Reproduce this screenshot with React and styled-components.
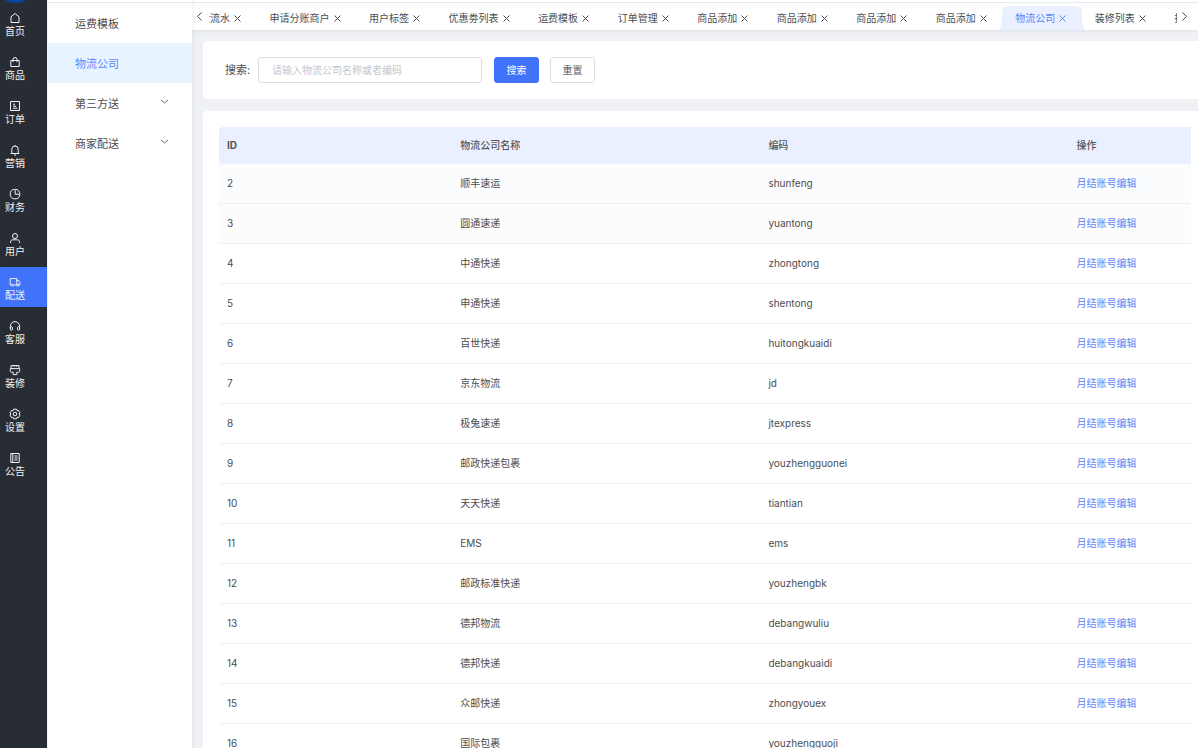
import React from 'react';
import styled, { createGlobalStyle } from 'styled-components';

const GlobalStyle = createGlobalStyle`
  * { box-sizing: border-box; }
  body {
    margin: 0;
    font-family: Inter, "Noto Sans CJK SC", sans-serif;
    font-size: 10px;
    line-height: 16px;
    color: #4c4d51;
    background: #eff1f5;
  }
  button, input { font: inherit; }
  ul { list-style: none; margin: 0; padding: 0; }
  a { color: inherit; text-decoration: none; }
`;

const Shell = styled.div`
  display: flex;
  height: 100vh;
  overflow: hidden;
`;

const Rail = styled.nav`
  flex: none;
  width: 47px;
  background: #282c34;
`;

const Logo = styled.svg`
  display: block;
  width: 31px;
  height: 3px;
`;

const RailList = styled.ul`
  display: flex;
  flex-direction: column;
  gap: 4px;
`;

const RailLink = styled.a`
  display: flex;
  flex-direction: column;
  align-items: center;
  height: 40px;
  padding: 9px 17px 0 0;
  color: #f1f2f3;
  background: ${(p) => (p.$active ? '#4073fa' : 'transparent')};

  svg { display: block; width: 12px; height: 12px; }
  span { line-height: 14px; }
`;

const SideMenu = styled.nav`
  position: relative;
  z-index: 1;
  flex: none;
  width: 145px;
  padding-top: 2px;
  background: #fff;
  border-left: 1px solid #eef0f4;
  box-shadow: 1px 0 4px rgba(0, 21, 41, 0.08);

  ul { border-top: 1px solid #e6e8f2; }
`;

const SideLink = styled.a`
  display: flex;
  align-items: center;
  justify-content: space-between;
  height: 40px;
  padding: 2px 23px 0 27px;
  font-size: 11px;
  color: ${(p) => (p.$active ? '#5b85fa' : '#4c4d51')};
  background: ${(p) => (p.$active ? '#e7f4ff' : 'transparent')};

  svg { width: 9px; height: 9px; margin-bottom: 6px; }
`;

const Main = styled.main`
  flex: 1;
  min-width: 0;
  display: flex;
  flex-direction: column;
`;

const TabBar = styled.div`
  flex: none;
  display: flex;
  height: 30px;
  padding-top: 2px;
  background: #fff;
  box-shadow: 0 1px 4px rgba(0, 21, 41, 0.08);
`;

const ScrollButton = styled.button`
  flex: none;
  display: flex;
  align-items: center;
  width: ${(p) => p.$width};
  padding: 0 0 0 4px;
  border: 0;
  border-top: 1px solid #e6e8f2;
  background: none;
  color: #444548;

  svg { width: 7px; height: 11px; }
`;

const TabViewport = styled.div`
  flex: 1;
  min-width: 0;
  display: flex;
  overflow: hidden;
  border-top: 1px solid #e6e8f2;
`;

const TabList = styled.ul`
  flex: 1 0 auto;
  display: flex;
  margin: 3px -64px 0 -32px;
`;

const Tab = styled.li`
  position: relative;
  flex: 1 0 auto;
  display: flex;
  align-items: center;
  gap: 4px;
  padding: 0 15px 0 13px;
  white-space: nowrap;
  border-radius: 6px 6px 0 0;
  color: ${(p) => (p.$active ? '#5b85fa' : '#4c4d51')};
  background: ${(p) => (p.$active ? '#eaf0ff' : 'transparent')};

  &::before, &::after {
    content: '';
    display: ${(p) => (p.$active ? 'block' : 'none')};
    position: absolute;
    bottom: 0;
    width: 3px;
    height: 8px;
    background: #eaf0ff;
  }
  &::before { right: 100%; clip-path: polygon(100% 0, 100% 100%, 0 100%); }
  &::after { left: 100%; clip-path: polygon(0 0, 100% 100%, 0 100%); }
`;

const CloseButton = styled.button`
  display: flex;
  padding: 0;
  border: 0;
  background: none;
  color: inherit;

  svg { width: 7px; height: 7px; }
`;

const Content = styled.div`
  flex: 1;
  min-height: 0;
  overflow: hidden auto;
  scrollbar-width: none;
  display: flex;
  flex-direction: column;
  gap: 12px;
  padding: 11px 0 0 11px;
`;

const SearchCard = styled.form`
  flex: none;
  display: flex;
  align-items: center;
  padding: 16px 22px;
  background: #fff;
  border-radius: 4px 0 0 4px;
`;

const SearchLabel = styled.label`
  width: 33px;
  font-size: 11px;
`;

const SearchInput = styled.input`
  width: 224px;
  height: 26px;
  margin-right: 12px;
  padding: 0 13px;
  border: 1px solid #dcdee6;
  border-radius: 3px;
  color: #4c4d51;
  outline: none;

  &::placeholder { color: #c3c7cf; opacity: 1; }
`;

const Button = styled.button`
  width: 45px;
  height: 26px;
  margin-right: 11px;
  padding: 0;
  border: 1px solid ${(p) => (p.$primary ? '#4073fa' : '#dcdee6')};
  border-radius: 3px;
  color: ${(p) => (p.$primary ? '#fff' : '#606266')};
  background: ${(p) => (p.$primary ? '#4073fa' : '#fff')};
`;

const TableCard = styled.section`
  flex: none;
  padding: 16px 7px 16px 16px;
  background: #fff;
  border-radius: 4px 0 0 0;
`;

const Table = styled.table`
  width: 100%;
  table-layout: fixed;
  border-collapse: separate;
  border-spacing: 0;
  text-align: left;
`;

const HeadCell = styled.th`
  width: ${(p) => p.$width};
  height: 37px;
  padding: 0 8px 2px;
  font-weight: ${(p) => (p.$strong ? 700 : 500)};
  color: #55575d;
  background: #eaf0ff;

  &:first-child { border-radius: 4px 0 0 4px; }
`;

const Row = styled.tr`
  background: ${(p) => p.$tint || '#fff'};
`;

const Cell = styled.td`
  height: 40px;
  padding: 0 8px 2px;
  border-bottom: 1px solid #eff0f3;
`;

const EditLink = styled.a`
  color: #5b85fa;
`;

const Icon = ({ children }) => (
  <svg viewBox="0 0 12 12" fill="none" stroke="currentColor" strokeWidth="1" strokeLinejoin="round" aria-hidden="true">
    {children}
  </svg>
);

const railItems = [
  ['首页', <Icon><path d="M2 10.5V4.8L6 1.4l4 3.4v5.7z" /></Icon>],
  ['商品', <Icon><path d="M1.8 4.5h8.4v6H1.8zM4 6V3.5a2 2 0 0 1 4 0V6" /></Icon>],
  ['订单', <Icon><path d="M1.5 1.5h9v9h-9zM4 4.2h2M4 6.2h3M4 8.2h4.5" /></Icon>],
  ['营销', <Icon><path d="M1.6 9.5h8.8M2.8 9.3V5.2a3.2 3.2 0 0 1 6.4 0v4.1M6 1v1M5 11h2" /></Icon>],
  ['财务', <Icon><path d="M10.8 6.5A4.8 4.8 0 1 1 5.5 1.3M6.2 1.2v5h4.6a4.7 4.7 0 0 0-4.6-5z" /></Icon>],
  ['用户', <Icon><circle cx="6" cy="4" r="2.5" /><path d="M1.6 11V9.8c0-1.2.8-2 2-2h4.8c1.2 0 2 .8 2 2V11" /></Icon>],
  ['配送', <Icon><path d="M2.3 9H1.2V2.6h6.6V9H4.6M7.8 4.4h1.8l1.3 2V9H9.8" /><circle cx="3.5" cy="9.2" r="1" /><circle cx="8.8" cy="9.2" r="1" /></Icon>],
  ['客服', <Icon><path d="M1.4 8.5V6.2a4.6 4.6 0 0 1 9.2 0v2.3" /><rect x="1.4" y="6.8" width="2" height="3.4" rx="0.8" /><rect x="8.6" y="6.8" width="2" height="3.4" rx="0.8" /></Icon>],
  ['装修', <Icon><path d="M2 4.5V1.6h8v2.9M5 1.6v1.2M7.4 1.6v1.2M1.3 4.6h9.4v2.2c0 1-.6 1.5-1.5 1.5H7.8v2.3H4.2V8.3H2.8c-.9 0-1.5-.5-1.5-1.5z" /></Icon>],
  ['设置', <Icon><path d="M4.5 1.2h3l.5 1.5 1.6-.2 1.4 2.3L10 6l1 1.2-1.4 2.3L8 9.3l-.5 1.5h-3L4 9.3l-1.6.2L1 7.2 2 6 1 4.8l1.4-2.3 1.6.2z" /><circle cx="6" cy="6" r="1.8" /></Icon>],
  ['公告', <Icon><path d="M1.8 1.5h8.4v9H1.8zM3.8 1.5v9M5.5 4h3M5.5 6h3M5.5 8h3" /></Icon>],
];

const menuItems = [
  { label: '运费模板' },
  { label: '物流公司', active: true },
  { label: '第三方送', group: true },
  { label: '商家配送', group: true },
];

const tabs = [
  '资金流水', '申请分账商户', '用户标签', '优惠劵列表', '运费模板', '订单管理',
  '商品添加', '商品添加', '商品添加', '商品添加', '物流公司', '装修列表', '拼团商品',
];

const companies = [
  [2, '顺丰速运', 'shunfeng'],
  [3, '圆通速递', 'yuantong'],
  [4, '中通快递', 'zhongtong'],
  [5, '申通快递', 'shentong'],
  [6, '百世快递', 'huitongkuaidi'],
  [7, '京东物流', 'jd'],
  [8, '极兔速递', 'jtexpress'],
  [9, '邮政快递包裹', 'youzhengguonei'],
  [10, '天天快递', 'tiantian'],
  [11, 'EMS', 'ems'],
  [12, '邮政标准快递', 'youzhengbk', true],
  [13, '德邦物流', 'debangwuliu'],
  [14, '德邦快递', 'debangkuaidi'],
  [15, '众邮快递', 'zhongyouex'],
  [16, '国际包裹', 'youzhengguoji', true],
];

const rowTints = ['#fafcfe', '#fcfcfc'];

export default function App() {
  return (
    <>
      <GlobalStyle />
      <Shell>
        <Rail>
          <Logo viewBox="0 0 31 3" aria-hidden="true">
            <circle cx="15.5" cy="-18" r="21" fill="#0b419c" />
          </Logo>
          <RailList>
            {railItems.map(([label, icon]) => (
              <li key={label}>
                <RailLink href="#" $active={label === '配送'}>
                  {icon}
                  <span>{label}</span>
                </RailLink>
              </li>
            ))}
          </RailList>
        </Rail>

        <SideMenu>
          <ul>
            {menuItems.map((item) => (
              <li key={item.label}>
                <SideLink href="#" $active={item.active}>
                  {item.label}
                  {item.group && (
                    <svg viewBox="0 0 9 9" fill="none" stroke="#666a70" aria-hidden="true">
                      <path d="M1 3l3.5 3L8 3" />
                    </svg>
                  )}
                </SideLink>
              </li>
            ))}
          </ul>
        </SideMenu>

        <Main>
          <TabBar>
            <ScrollButton $width="17px" aria-label="向左滚动">
              <svg viewBox="0 0 7 11" fill="none" stroke="currentColor"><path d="M5.5 1.5l-4 4 4 4" /></svg>
            </ScrollButton>
            <TabViewport>
              <TabList>
                {tabs.map((tab, i) => (
                  <Tab key={i} $active={tab === '物流公司'}>
                    <a href="#">{tab}</a>
                    <CloseButton aria-label="关闭">
                      <svg viewBox="0 0 7 7" fill="none" stroke="currentColor" strokeWidth="1">
                        <path d="M0.5 0.5l6 6M6.5 0.5l-6 6" />
                      </svg>
                    </CloseButton>
                  </Tab>
                ))}
              </TabList>
            </TabViewport>
            <ScrollButton $width="21px" aria-label="向右滚动">
              <svg viewBox="0 0 7 11" fill="none" stroke="currentColor"><path d="M1.5 1.5l4 4-4 4" /></svg>
            </ScrollButton>
          </TabBar>

          <Content>
            <SearchCard onSubmit={(e) => e.preventDefault()}>
              <SearchLabel htmlFor="keyword">搜索:</SearchLabel>
              <SearchInput id="keyword" type="text" placeholder="请输入物流公司名称或者编码" />
              <Button type="submit" $primary>搜索</Button>
              <Button type="reset">重置</Button>
            </SearchCard>

            <TableCard>
              <Table>
                <thead>
                  <tr>
                    <HeadCell $width="24%" $strong>ID</HeadCell>
                    <HeadCell $width="31.7%">物流公司名称</HeadCell>
                    <HeadCell $width="31.7%">编码</HeadCell>
                    <HeadCell>操作</HeadCell>
                  </tr>
                </thead>
                <tbody>
                  {companies.map(([id, name, code, locked], i) => (
                    <Row key={id} $tint={rowTints[i]}>
                      <Cell>{id}</Cell>
                      <Cell>{name}</Cell>
                      <Cell>{code}</Cell>
                      <Cell>{!locked && <EditLink href="#">月结账号编辑</EditLink>}</Cell>
                    </Row>
                  ))}
                </tbody>
              </Table>
            </TableCard>
          </Content>
        </Main>
      </Shell>
    </>
  );
}
